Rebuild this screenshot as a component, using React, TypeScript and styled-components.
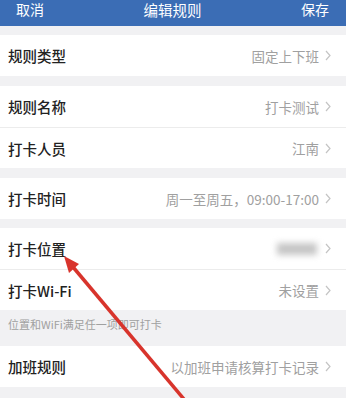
import styled, { createGlobalStyle } from 'styled-components';

const GlobalStyle = createGlobalStyle`
  html, body {
    margin: 0;
    padding: 0;
    background: #f1f1f3;
  }
  body {
    font-family: "Noto Sans CJK SC", "Noto Sans", sans-serif;
  }
`;

const Page = styled.div`
  position: relative;
  width: 346px;
  height: 398px;
  overflow: hidden;
  background: #f1f1f3;
`;

const Header = styled.header`
  height: 26px;
  box-sizing: border-box;
  background: #3b6db5;
  color: #ffffff;
  display: flex;
  justify-content: space-between;
  align-items: flex-start;
  padding: 2px 17px 0 16px;
  font-size: 14px;
  line-height: 15px;
`;

const HeaderTitle = styled.span`
  font-size: 14.5px;
`;

const Group = styled.section<{ $gap: number }>`
  margin-top: ${(p) => p.$gap}px;
  background: #ffffff;
  display: flex;
  flex-direction: column;
`;

const Row = styled.div`
  height: 41px;
  box-sizing: border-box;
  display: flex;
  align-items: center;
  justify-content: space-between;
  padding: 0 15px 0 8px;
  position: relative;

  & + & {
    border-top: 1px solid #ececec;
  }
`;

const Label = styled.span`
  font-size: 14.5px;
  font-weight: 500;
  color: #222222;
`;

const ValueArea = styled.span`
  display: flex;
  align-items: center;
  gap: 6px;
  font-size: 13.5px;
  color: #a0a0a0;
`;

const Blurred = styled.span`
  display: block;
  width: 40px;
  height: 12px;
  margin-right: 2px;
  background: #c6c6c6;
  filter: blur(3px);
`;

const Note = styled.div`
  height: 36px;
  box-sizing: border-box;
  padding: 7px 8px 0;
  font-size: 11px;
  line-height: 14px;
  color: #a0a0a0;
`;

const Overlay = styled.svg`
  position: absolute;
  left: 0;
  top: 0;
  pointer-events: none;
`;

const Chevron = () => (
  <svg width="6" height="11" viewBox="0 0 6 11">
    <path d="M1 1l4 4.5-4 4.5" fill="none" stroke="#c4c4c4" strokeWidth="1.2" />
  </svg>
);

interface ItemProps {
  label: string;
  value?: string;
  blurred?: boolean;
}

const Item = ({ label, value, blurred }: ItemProps) => (
  <Row>
    <Label>{label}</Label>
    <ValueArea>
      {blurred ? <Blurred /> : value}
      <Chevron />
    </ValueArea>
  </Row>
);

export default function App() {
  return (
    <Page>
      <GlobalStyle />
      <Header>
        <span>取消</span>
        <HeaderTitle>编辑规则</HeaderTitle>
        <span>保存</span>
      </Header>
      <Group $gap={9}>
        <Item label="规则类型" value="固定上下班" />
      </Group>
      <Group $gap={10}>
        <Item label="规则名称" value="打卡测试" />
        <Item label="打卡人员" value="江南" />
      </Group>
      <Group $gap={10}>
        <Item label="打卡时间" value="周一至周五，09:00-17:00" />
      </Group>
      <Group $gap={9}>
        <Item label="打卡位置" blurred />
        <Item label="打卡Wi-Fi" value="未设置" />
      </Group>
      <Note>位置和WiFi满足任一项即可打卡</Note>
      <Group $gap={0}>
        <Item label="加班规则" value="以加班申请核算打卡记录" />
      </Group>
      <Overlay width="346" height="398" viewBox="0 0 346 398">
        <line x1="73" y1="267" x2="188" y2="404" stroke="#d8342c" strokeWidth="3.5" />
        <polygon points="64,256 79,264 69,273" fill="#d8342c" />
      </Overlay>
    </Page>
  );
}
